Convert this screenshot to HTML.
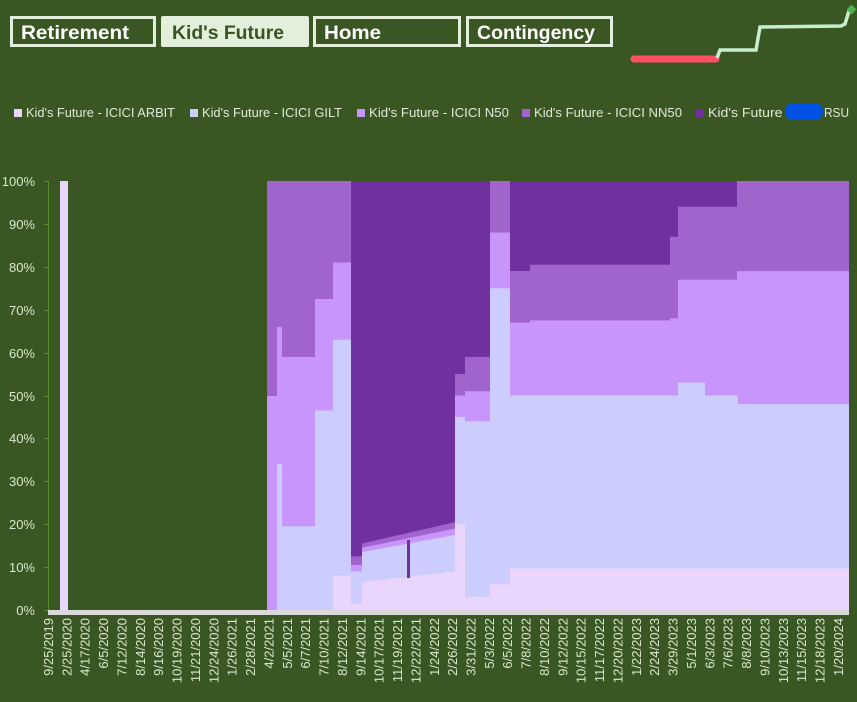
<!DOCTYPE html>
<html><head><meta charset="utf-8"><style>
html,body{margin:0;padding:0;background:#3a5623;width:857px;height:702px;overflow:hidden;font-family:"Liberation Sans",sans-serif}
</style></head><body>
<svg width="857" height="702" viewBox="0 0 857 702" xmlns="http://www.w3.org/2000/svg" font-family="Liberation Sans, sans-serif">
<rect width="857" height="702" fill="#3a5623"/>
<!-- buttons -->
<g font-weight="bold" font-size="19">
<rect x="11.5" y="17.5" width="143" height="28" fill="none" stroke="#e2efda" stroke-width="3"/>
<text x="21" y="39" fill="#fff" textLength="108" lengthAdjust="spacingAndGlyphs">Retirement</text>
<rect x="161" y="16" width="148" height="31" rx="2" fill="#e2efda"/>
<text x="172" y="39" fill="#375623" textLength="112" lengthAdjust="spacingAndGlyphs">Kid's Future</text>
<rect x="314.5" y="17.5" width="145" height="28" fill="none" stroke="#e2efda" stroke-width="3"/>
<text x="324" y="39" fill="#fff" textLength="57" lengthAdjust="spacingAndGlyphs">Home</text>
<rect x="467.5" y="17.5" width="144" height="28" fill="none" stroke="#e2efda" stroke-width="3"/>
<text x="477" y="39" fill="#fff" textLength="118" lengthAdjust="spacingAndGlyphs">Contingency</text>
</g>
<!-- sparkline -->
<line x1="634" y1="59" x2="716" y2="59" stroke="#ff5064" stroke-width="7" stroke-linecap="round" stroke-dasharray="3 2"/>
<polyline points="717,58 720,50 756,50 760,27 841,26 845,24 849,11" fill="none" stroke="#c6efce" stroke-width="3.5"/>
<rect x="848" y="6" width="7" height="7" fill="#4caf50" transform="rotate(45 851.5 9.5)"/>
<!-- legend -->
<g font-size="13" fill="#e2e8d8">
<rect x="14" y="109" width="8" height="8" fill="#ead6fc"/><text x="26" y="117" textLength="149" lengthAdjust="spacingAndGlyphs">Kid's Future - ICICI ARBIT</text>
<rect x="190" y="109" width="8" height="8" fill="#ccccff"/><text x="202" y="117" textLength="140" lengthAdjust="spacingAndGlyphs">Kid's Future - ICICI GILT</text>
<rect x="357" y="109" width="8" height="8" fill="#c896fa"/><text x="369" y="117" textLength="140" lengthAdjust="spacingAndGlyphs">Kid's Future - ICICI N50</text>
<rect x="522" y="109" width="8" height="8" fill="#a064cc"/><text x="534" y="117" textLength="148" lengthAdjust="spacingAndGlyphs">Kid's Future - ICICI NN50</text>
<rect x="696" y="109" width="8" height="8" fill="#7030a0"/><text x="708" y="117" textLength="83" lengthAdjust="spacingAndGlyphs">Kid's Future -</text>
<text x="824" y="117" textLength="25" lengthAdjust="spacingAndGlyphs">RSU</text>
<rect x="785" y="103" width="38" height="17" rx="8" fill="#0050e6"/>
</g>
<!-- y axis labels -->
<g font-size="13" fill="#d9e8cc" text-anchor="end">
<text x="35" y="186">100%</text><text x="35" y="229">90%</text><text x="35" y="272">80%</text><text x="35" y="315">70%</text><text x="35" y="358">60%</text><text x="35" y="401">50%</text><text x="35" y="443">40%</text><text x="35" y="486">30%</text><text x="35" y="529">20%</text><text x="35" y="572">10%</text><text x="35" y="615">0%</text>
</g>
<g stroke="#5a8a30" stroke-width="1">
<line x1="48.5" y1="181" x2="48.5" y2="610"/>
<line x1="44" y1="181.5" x2="48" y2="181.5"/><line x1="44" y1="224.5" x2="48" y2="224.5"/><line x1="44" y1="267.5" x2="48" y2="267.5"/><line x1="44" y1="310.5" x2="48" y2="310.5"/><line x1="44" y1="353.5" x2="48" y2="353.5"/><line x1="44" y1="396.5" x2="48" y2="396.5"/><line x1="44" y1="438.5" x2="48" y2="438.5"/><line x1="44" y1="481.5" x2="48" y2="481.5"/><line x1="44" y1="524.5" x2="48" y2="524.5"/><line x1="44" y1="567.5" x2="48" y2="567.5"/><line x1="44" y1="610.5" x2="48" y2="610.5"/>
</g>
<!-- data -->
<rect x="60" y="181" width="8" height="429" fill="#ead6fc"/>
<!-- RSU backgrounds -->
<g fill="#7030a0">
<rect x="351" y="181" width="139" height="429"/>
<rect x="510" y="181" width="228" height="429"/>
</g>
<!-- NN50 -->
<g fill="#a064cc">
<rect x="267" y="181" width="84" height="429"/>
<rect x="351" y="556.4" width="11" height="53.6"/>
<polygon points="362,543.5 455,522.1 455,610 362,610"/>
<rect x="455" y="374" width="10" height="236"/>
<rect x="465" y="356.9" width="25" height="253.1"/>
<rect x="490" y="181" width="20" height="429"/>
<rect x="510" y="271" width="20" height="339"/>
<rect x="530" y="264.7" width="140" height="345.3"/>
<rect x="670" y="236.8" width="8" height="373.2"/>
<rect x="678" y="206.7" width="60" height="403.3"/>
<rect x="737" y="181" width="112" height="429"/>
</g>
<!-- N50 -->
<g fill="#c896fa">
<rect x="267" y="396" width="10" height="214"/>
<rect x="277" y="326.9" width="5" height="283.1"/>
<rect x="282" y="357" width="33" height="253"/>
<rect x="315" y="299" width="18" height="311"/>
<rect x="333" y="262.5" width="18" height="347.5"/>
<rect x="351" y="565" width="11" height="45"/>
<polygon points="362,547.8 455,528.5 455,610 362,610"/>
<rect x="455" y="395.5" width="10" height="214.5"/>
<rect x="465" y="391.2" width="25" height="218.8"/>
<rect x="490" y="232.5" width="20" height="377.5"/>
<rect x="510" y="322.6" width="20" height="287.4"/>
<rect x="530" y="320.4" width="140" height="289.6"/>
<rect x="670" y="318.3" width="8" height="291.7"/>
<rect x="678" y="279.7" width="60" height="330.3"/>
<rect x="737" y="271.1" width="112" height="338.9"/>
</g>
<!-- GILT -->
<g fill="#ccccff">
<rect x="277" y="464.1" width="5" height="145.9"/>
<rect x="282" y="526.3" width="33" height="83.7"/>
<rect x="315" y="410.5" width="18" height="199.5"/>
<rect x="333" y="339.7" width="18" height="270.3"/>
<rect x="351" y="571.4" width="11" height="38.6"/>
<polygon points="362,552.1 455,534.9 455,610 362,610"/>
<rect x="455" y="416.9" width="10" height="193.1"/>
<rect x="465" y="421.2" width="25" height="188.8"/>
<rect x="490" y="288.3" width="20" height="321.7"/>
<rect x="510" y="395.5" width="228" height="214.5"/>
<rect x="678" y="382.6" width="27" height="227.4"/>
<rect x="737" y="404.1" width="112" height="205.9"/>
</g>
<!-- ARBIT -->
<g fill="#ead6fc">
<rect x="333" y="575.7" width="18" height="34.3"/>
<rect x="351" y="603.6" width="11" height="6.4"/>
<polygon points="362,582.1 455,571.4 455,610 362,610"/>
<rect x="455" y="524.2" width="10" height="85.8"/>
<rect x="465" y="597.1" width="25" height="12.9"/>
<rect x="490" y="584.3" width="20" height="25.7"/>
<rect x="510" y="568.4" width="339" height="41.6"/>
</g>
<rect x="407" y="540" width="3" height="38" fill="#7030a0"/>
<!-- baseline -->
<rect x="48" y="610" width="801" height="5" fill="#d9d9d9"/>
<!-- x labels -->
<g font-size="13" fill="#d9e8cc" text-anchor="end">
<text transform="translate(53,618) rotate(-90)">9/25/2019</text>
<text transform="translate(71.4,618) rotate(-90)">2/25/2020</text>
<text transform="translate(89.7,618) rotate(-90)">4/17/2020</text>
<text transform="translate(108.1,618) rotate(-90)">6/5/2020</text>
<text transform="translate(126.5,618) rotate(-90)">7/12/2020</text>
<text transform="translate(144.8,618) rotate(-90)">8/14/2020</text>
<text transform="translate(163.2,618) rotate(-90)">9/16/2020</text>
<text transform="translate(181.6,618) rotate(-90)">10/19/2020</text>
<text transform="translate(200,618) rotate(-90)">11/21/2020</text>
<text transform="translate(218.3,618) rotate(-90)">12/24/2020</text>
<text transform="translate(236.7,618) rotate(-90)">1/26/2021</text>
<text transform="translate(255.1,618) rotate(-90)">2/28/2021</text>
<text transform="translate(273.4,618) rotate(-90)">4/2/2021</text>
<text transform="translate(291.8,618) rotate(-90)">5/5/2021</text>
<text transform="translate(310.2,618) rotate(-90)">6/7/2021</text>
<text transform="translate(328.5,618) rotate(-90)">7/10/2021</text>
<text transform="translate(346.9,618) rotate(-90)">8/12/2021</text>
<text transform="translate(365.3,618) rotate(-90)">9/14/2021</text>
<text transform="translate(383.7,618) rotate(-90)">10/17/2021</text>
<text transform="translate(402,618) rotate(-90)">11/19/2021</text>
<text transform="translate(420.4,618) rotate(-90)">12/22/2021</text>
<text transform="translate(438.8,618) rotate(-90)">1/24/2022</text>
<text transform="translate(457.1,618) rotate(-90)">2/26/2022</text>
<text transform="translate(475.5,618) rotate(-90)">3/31/2022</text>
<text transform="translate(493.9,618) rotate(-90)">5/3/2022</text>
<text transform="translate(512.2,618) rotate(-90)">6/5/2022</text>
<text transform="translate(530.6,618) rotate(-90)">7/8/2022</text>
<text transform="translate(549,618) rotate(-90)">8/10/2022</text>
<text transform="translate(567.4,618) rotate(-90)">9/12/2022</text>
<text transform="translate(585.7,618) rotate(-90)">10/15/2022</text>
<text transform="translate(604.1,618) rotate(-90)">11/17/2022</text>
<text transform="translate(622.5,618) rotate(-90)">12/20/2022</text>
<text transform="translate(640.8,618) rotate(-90)">1/22/2023</text>
<text transform="translate(659.2,618) rotate(-90)">2/24/2023</text>
<text transform="translate(677.6,618) rotate(-90)">3/29/2023</text>
<text transform="translate(695.9,618) rotate(-90)">5/1/2023</text>
<text transform="translate(714.3,618) rotate(-90)">6/3/2023</text>
<text transform="translate(732.7,618) rotate(-90)">7/6/2023</text>
<text transform="translate(751.1,618) rotate(-90)">8/8/2023</text>
<text transform="translate(769.4,618) rotate(-90)">9/10/2023</text>
<text transform="translate(787.8,618) rotate(-90)">10/13/2023</text>
<text transform="translate(806.2,618) rotate(-90)">11/15/2023</text>
<text transform="translate(824.5,618) rotate(-90)">12/18/2023</text>
<text transform="translate(842.9,618) rotate(-90)">1/20/2024</text>
</g>
</svg>
</body></html>
